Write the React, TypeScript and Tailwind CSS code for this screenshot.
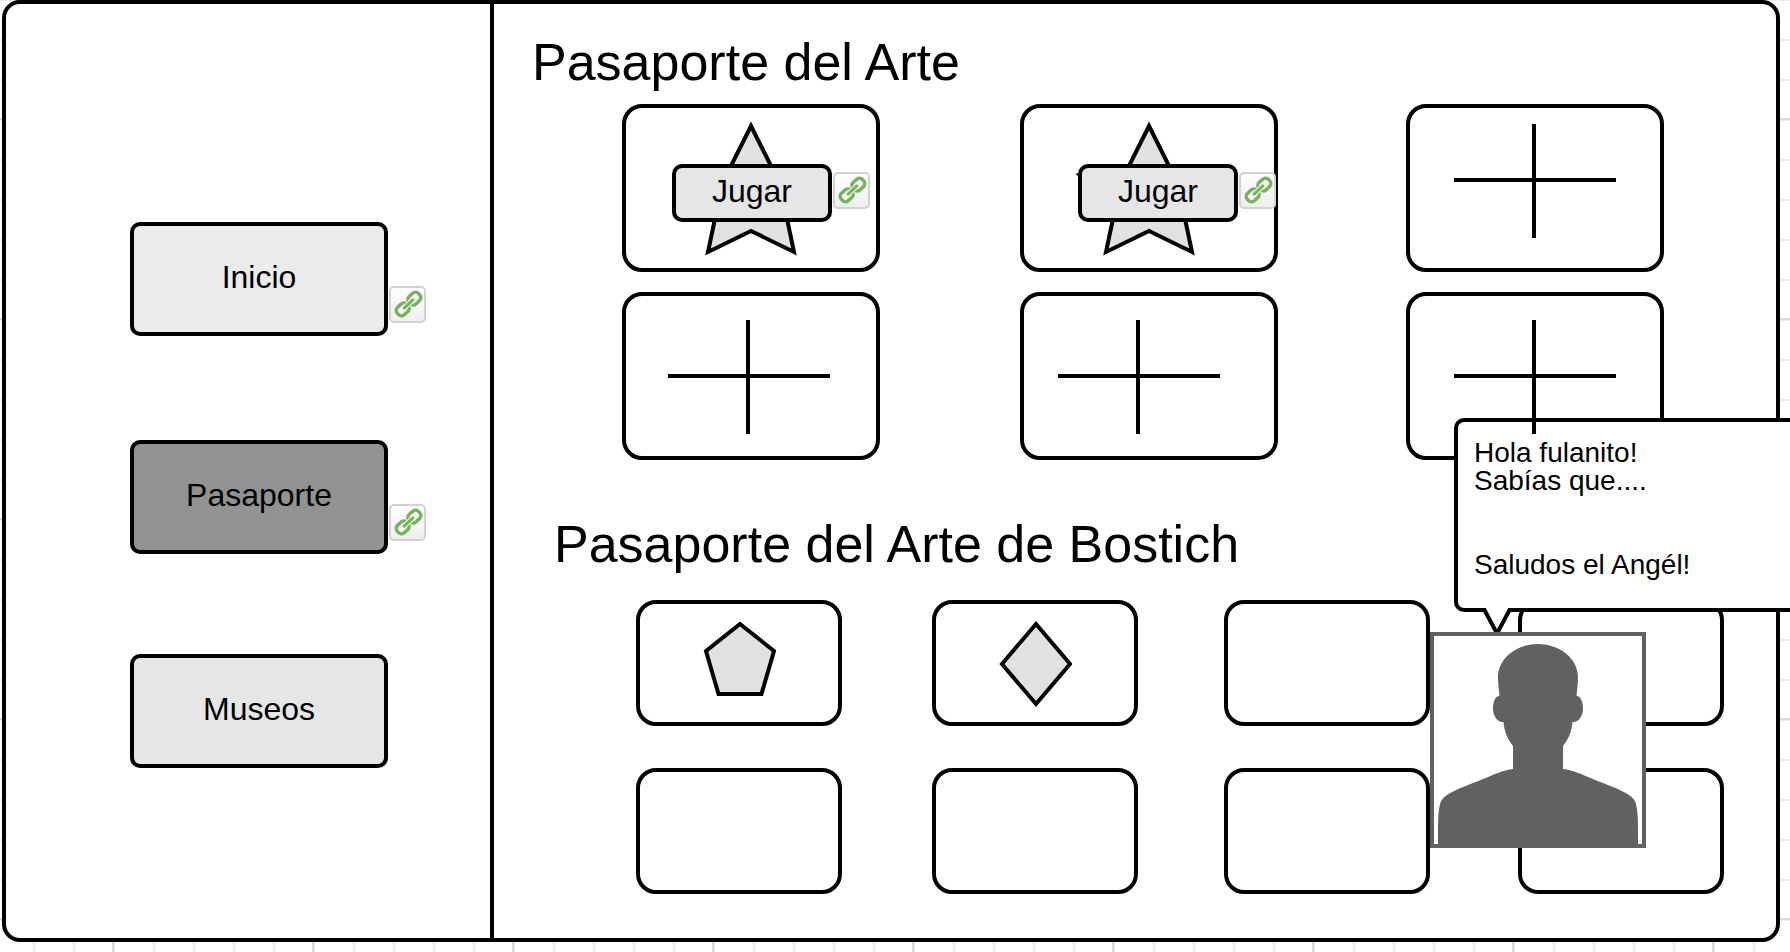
import type { ReactNode } from "react";

function LinkBadge({ label, className = "" }: { label: string; className?: string }) {
  return (
    <a
      href="#"
      aria-label={label}
      className={`block size-[37px] shrink-0 rounded-[5px] border-2 border-[#d2d2d2] bg-linear-to-b from-white to-[#eeeeee] ${className}`}
    >
      <svg viewBox="0 0 33 33" className="size-full" fill="none" stroke="#74b35c" strokeLinecap="round">
        <g transform="translate(17.500 16) rotate(-43)">
          <rect x="-14.500" y="-5" width="13" height="10" rx="4" strokeWidth="3.400" />
          <rect x="1.500" y="-5" width="13" height="10" rx="4" strokeWidth="3.400" />
          <path d="M-6 0H6" stroke="#f2f8ef" strokeWidth="5.200" />
          <path d="M-6 0H6" strokeWidth="3" />
        </g>
      </svg>
    </a>
  );
}

function NavItem({ label, fill, linked = false }: { label: string; fill: string; linked?: boolean }) {
  return (
    <li className="flex items-start">
      <button
        type="button"
        className={`h-[114px] w-[258px] rounded-[10px] border-4 border-black pb-1 text-[32px] leading-[36px] ${fill}`}
      >
        {label}
      </button>
      {linked && <LinkBadge label={`Enlace de ${label}`} className="mt-16 ml-px" />}
    </li>
  );
}

function StampCard({ children, className = "" }: { children?: ReactNode; className?: string }) {
  return (
    <div className={`relative flex h-[168px] w-[258px] items-start rounded-[20px] border-4 border-black ${className}`}>
      {children}
    </div>
  );
}

function StarStamp({ className }: { className: string }) {
  return (
    <StampCard className={className}>
      <svg viewBox="0 0 250 160" className="absolute inset-0 size-full" aria-hidden="true">
        <path
          d="M125 18L146 60L194 67L158.500 99L168 144L125 123L82 144L91.500 99L56 67L104 60Z"
          fill="#e1e1e1"
          stroke="#000"
          strokeWidth="4"
        />
      </svg>
      <button
        type="button"
        className="relative h-[58px] w-[160px] shrink-0 rounded-[10px] border-4 border-black bg-[#e6e6e6] pb-1 text-[32px] leading-[36px]"
      >
        Jugar
      </button>
      <LinkBadge label="Enlace de Jugar" className="relative mt-2 ml-px" />
    </StampCard>
  );
}

function PlusStamp({ className }: { className: string }) {
  return (
    <StampCard className={className}>
      <svg viewBox="0 0 162 114" className="relative z-20 h-[114px] w-[162px]" stroke="#000" strokeWidth="4" aria-hidden="true">
        <path d="M0 56H162M80 0V114" />
      </svg>
    </StampCard>
  );
}

function SmallCard({ children }: { children?: ReactNode }) {
  return (
    <div className="flex h-[126px] w-[206px] justify-center rounded-[20px] border-4 border-black pt-4">{children}</div>
  );
}

function Title({ children, className }: { children: ReactNode; className: string }) {
  return <h2 className={`text-[52px] leading-[60px] ${className}`}>{children}</h2>;
}

function Message() {
  return (
    <aside className="absolute top-[418px] right-0 left-[1454px] z-10">
      <div className="h-[194px] rounded-l-[10px] border-4 border-r-0 border-black bg-white pt-[17px] pl-4 text-[28px] leading-[28px] whitespace-nowrap">
        <p>Hola fulanito!</p>
        <p>Sabías que....</p>
        <p className="mt-14">Saludos el Angél!</p>
      </div>
      <svg viewBox="0 0 28 30" className="absolute top-[190px] left-[29px] h-[30px] w-[28px]" aria-hidden="true">
        <path d="M2 0H26L14 24Z" fill="#fff" />
        <path d="M0 2H1.500L14 25.500L26.500 2H28" fill="none" stroke="#000" strokeWidth="4" />
      </svg>
    </aside>
  );
}

function Avatar() {
  return (
    <svg
      viewBox="0 0 216 216"
      className="absolute top-[632px] left-[1430px] z-30 size-[216px]"
      role="img"
      aria-label="Angél"
    >
      <rect x="2" y="2" width="212" height="212" fill="#fff" stroke="#616161" strokeWidth="4" />
      <path
        fill="#616161"
        d="M108 12C86 12 68 27 68 45C68 52 69 58 69.500 64C65 64 63 70 63 77C63 84 68 91 73.500 90C74 99 78 108 83 114V137C73 138 63 143 53 147C41 152 26 157 17 163C13 166 11 168 10 172C8 180 8 190 8 200V213H208V200C208 190 208 180 206 172C205 168 203 166 199 163C190 157 175 152 163 147C153 143 143 138 133 137V114C138 108 142 99 142.500 90C148 91 153 84 153 77C153 70 151 64 146.500 64C147 58 148 52 148 45C148 27 130 12 108 12Z"
      />
    </svg>
  );
}

export default function App() {
  return (
    <div className="relative flex min-h-screen overflow-hidden bg-white bg-[image:linear-gradient(90deg,#d9d9d9_2px,transparent_2px),linear-gradient(#d9d9d9_2px,transparent_2px),linear-gradient(90deg,#ebebeb_2px,transparent_2px),linear-gradient(#ebebeb_2px,transparent_2px)] bg-[size:200px_200px,200px_200px,40px_40px,40px_40px] bg-[position:112px_0,0_118px,33px_0,0_39px] pr-[10px] pb-[10px] pl-[2px] font-['Liberation_Sans',Arial,sans-serif] text-black">
      <div className="flex flex-1 rounded-[18px] border-4 border-black bg-white">
        <nav className="w-[488px] shrink-0 border-r-4 border-black pt-[218px] pl-[124px]">
          <ul className="grid grid-rows-[218px_214px_114px]">
            <NavItem label="Inicio" fill="bg-[#ebebeb]" linked />
            <NavItem label="Pasaporte" fill="bg-[#929292]" linked />
            <NavItem label="Museos" fill="bg-[#e6e6e6]" />
          </ul>
        </nav>
        <main className="flex-1 pt-7">
          <section>
            <Title className="pl-[38px]">Pasaporte del Arte</Title>
            <div className="mt-3 grid grid-cols-[398fr_386fr_258fr] gap-y-5 pr-[112px] pl-32">
              <StarStamp className="pt-14 pl-[46px]" />
              <StarStamp className="pt-14 pl-[54px]" />
              <PlusStamp className="pt-4 pl-11" />
              <PlusStamp className="pt-6 pl-[42px]" />
              <PlusStamp className="pt-6 pl-[34px]" />
              <PlusStamp className="pt-6 pl-11" />
            </div>
          </section>
          <section className="mt-[54px]">
            <Title className="pl-[60px]">Pasaporte del Arte de Bostich</Title>
            <div className="mt-[26px] grid grid-cols-[296fr_292fr_294fr_206fr] gap-y-[42px] pr-[52px] pl-[142px]">
              <SmallCard>
                <svg viewBox="0 0 74 88" className="h-[88px] w-[74px]" aria-hidden="true">
                  <path d="M38 4L72 31L59.500 74H16.500L4 31Z" fill="#e1e1e1" stroke="#000" strokeWidth="4" />
                </svg>
              </SmallCard>
              <SmallCard>
                <svg viewBox="0 0 74 88" className="h-[88px] w-[74px]" aria-hidden="true">
                  <path d="M38 4L72 44L38 84L4 44Z" fill="#e1e1e1" stroke="#000" strokeWidth="4" />
                </svg>
              </SmallCard>
              <SmallCard />
              <SmallCard />
              <SmallCard />
              <SmallCard />
              <SmallCard />
              <SmallCard />
            </div>
          </section>
        </main>
      </div>
      <Message />
      <Avatar />
    </div>
  );
}
